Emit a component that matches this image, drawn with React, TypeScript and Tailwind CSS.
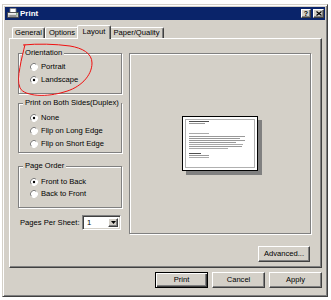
import type { ReactNode } from "react";

const raised =
  "border border-t-white border-l-white border-b-[#404040] border-r-[#404040] shadow-[inset_-1px_-1px_0_#808080] bg-[#d4d0c8]";

function Radio({ checked = false }: { checked?: boolean }) {
  return (
    <svg width="8" height="8" viewBox="0 0 8 8" className="shrink-0">
      <circle cx="4" cy="4" r="3.2" fill="#fff" />
      <path d="M1.5 6.5 A3.5 3.5 0 0 1 6.5 1.5" fill="none" stroke="#808080" strokeWidth="1" />
      <path d="M6.5 1.5 A3.5 3.5 0 0 1 1.5 6.5" fill="none" stroke="#fff" strokeWidth="1" />
      {checked && <circle cx="4" cy="4" r="1.2" fill="#000" />}
    </svg>
  );
}

function Option({ label, checked, h }: { label: string; checked?: boolean; h: string }) {
  return (
    <div className={`flex items-center gap-[3px] ${h}`}>
      <Radio checked={checked} />
      <span>{label}</span>
    </div>
  );
}

function Group({ title, className = "", children }: { title: string; className?: string; children: ReactNode }) {
  return (
    <fieldset
      className={`border border-[#808080] shadow-[inset_1px_1px_0_#fff,1px_1px_0_#fff] ${className}`}
    >
      <legend className="relative ml-[4px] bg-[#d4d0c8] px-[2px] leading-[8px]">{title}</legend>
      {children}
    </fieldset>
  );
}

function PrinterIcon() {
  return (
    <svg width="12" height="11" viewBox="0 0 12 11" className="shrink-0">
      <polygon points="3,0.5 9,0.5 9,4.5 3,4.5" fill="#fff" stroke="#808080" strokeWidth="0.8" />
      <polygon points="0.5,4.5 11.5,4.5 11.5,9.5 0.5,9.5" fill="#c8c8c8" stroke="#404040" strokeWidth="0.8" />
      <rect x="1" y="5" width="10" height="1.5" fill="#f0f0f0" />
      <rect x="2.5" y="7.5" width="7" height="1" fill="#606060" />
      <rect x="9" y="5.5" width="1.5" height="1" fill="#3a8a3a" />
    </svg>
  );
}

function PaperPreview() {
  const lines: [number, number, string][] = [
    [5, 27, "#505050"],
    [7, 23, "#999"],
    [17, 27, "#aaa"],
    [20, 63, "#999"],
    [22, 58, "#999"],
    [24, 63, "#999"],
    [26, 54, "#999"],
    [28, 61, "#aaa"],
    [30, 60, "#999"],
    [32, 46, "#aaa"],
    [37, 19, "#505050"],
    [39, 27, "#999"],
    [41, 27, "#aaa"],
  ];
  return (
    <svg width="80" height="59" viewBox="0 0 80 59">
      <rect x="4" y="4" width="76" height="55" fill="#808080" />
      <rect x="0.5" y="0.5" width="75" height="54" fill="#fff" stroke="#000" />
      <rect x="3.5" y="3.5" width="69" height="48" fill="none" stroke="#b0b0b0" />
      {lines.map(([y, x2, c], i) => (
        <rect key={i} x="7" y={y} width={x2 - 7} height="1" fill={c} />
      ))}
    </svg>
  );
}

function Button({ label, isDefault = false, className = "" }: { label: string; isDefault?: boolean; className?: string }) {
  const cls = isDefault
    ? "border border-black shadow-[inset_1px_1px_0_#fff,inset_-1px_-1px_0_#404040,inset_-2px_-2px_0_#808080] bg-[#d4d0c8]"
    : raised;
  return (
    <div className={`flex items-center justify-center w-[53px] h-[16px] ${cls} ${className}`}>{label}</div>
  );
}

export default function App() {
  return (
    <div className="relative w-[331px] h-[300px] bg-white overflow-hidden font-['Liberation_Sans',Arial,sans-serif] text-[7.6px] leading-none text-black">
      <div className="ml-[2px] mt-[4px] w-[326px] h-[293px] p-[2px] bg-[#d4d0c8] border border-t-[#d4d0c8] border-l-[#d4d0c8] border-b-[#404040] border-r-[#404040] shadow-[inset_1px_1px_0_#fff,inset_-1px_-1px_0_#808080] flex flex-col">
        {/* title bar */}
        <div className="h-[13px] bg-[#0a246a] flex items-center pl-[2px] pr-[1px]">
          <PrinterIcon />
          <span className="ml-[1px] text-white font-bold text-[8px]">Print</span>
          <div className="ml-auto flex gap-[2px]">
            <div className={`w-[10px] h-[9px] flex items-center justify-center font-bold text-[7px] ${raised}`}>?</div>
            <div className={`w-[11px] h-[9px] flex items-center justify-center ${raised}`}>
              <svg width="6" height="5" viewBox="0 0 6 5">
                <path d="M0.5 0.5 L5.5 4.5 M5.5 0.5 L0.5 4.5" stroke="#000" strokeWidth="1.2" />
              </svg>
            </div>
          </div>
        </div>

        {/* tabs */}
        <div className="flex items-end h-[13px] mt-[5px] pl-[7px]">
          <div className="flex items-center justify-center w-[33px] h-[11px] border-t border-l border-r border-t-white border-l-white border-r-[#404040] shadow-[inset_-1px_0_0_#808080] rounded-t-[2px]">General</div>
          <div className="flex items-center justify-center w-[34px] h-[11px] border-t border-l border-r border-t-white border-l-white border-r-[#404040] shadow-[inset_-1px_0_0_#808080] rounded-t-[2px]">Options</div>
          <div className="relative z-10 -mx-[2px] -mb-px flex items-center justify-center w-[34px] h-[14px] pb-[2px] bg-[#d4d0c8] border-t border-l border-r border-t-white border-l-white border-r-[#404040] shadow-[inset_-1px_0_0_#808080] rounded-t-[2px]">Layout</div>
          <div className="flex items-center justify-center w-[55px] h-[11px] border-t border-l border-r border-t-white border-l-white border-r-[#404040] shadow-[inset_-1px_0_0_#808080] rounded-t-[2px]">Paper/Quality</div>
        </div>

        {/* panel */}
        <div className={`h-[230px] ml-[4px] mr-[3px] flex items-start pt-[10px] pl-[8px] pr-[10px] ${raised}`}>
          <div className="w-[104px] flex flex-col">
            <Group title="Orientation">
              <div className="pl-[11px] pt-[3px] pb-[7px]">
                <Option h="h-[13px]" label="Portrait" />
                <Option h="h-[13px]" label="Landscape" checked />
              </div>
            </Group>
            <Group title="Print on Both Sides(Duplex)" className="mt-[5px]">
              <div className="pl-[11px] pt-[4px] pb-[2px]">
                <Option h="h-[13px]" label="None" checked />
                <Option h="h-[13px]" label="Flip on Long Edge" />
                <Option h="h-[13px]" label="Flip on Short Edge" />
              </div>
            </Group>
            <Group title="Page Order" className="mt-[9px]">
              <div className="pl-[11px] pt-[6px] pb-[7px]">
                <Option h="h-[12px]" label="Front to Back" checked />
                <Option h="h-[12px]" label="Back to Front" />
              </div>
            </Group>
            <div className="flex items-center h-[15px] mt-[7px] pl-[2px]">
              <span>Pages Per Sheet:</span>
              <div className="ml-auto mr-[1px] w-[39px] h-[15px] p-[2px] flex bg-white border border-t-[#808080] border-l-[#808080] border-b-white border-r-white shadow-[inset_1px_1px_0_#404040,inset_-1px_-1px_0_#d4d0c8]">
                <span className="flex-1 flex items-center pl-[2px]">1</span>
                <div className={`w-[10px] h-full flex items-center justify-center ${raised}`}>
                  <svg width="5" height="3" viewBox="0 0 5 3">
                    <polygon points="0,0 5,0 2.5,3" fill="#000" />
                  </svg>
                </div>
              </div>
            </div>
          </div>

          <div className="flex-1 ml-[7px] mt-[4px] flex flex-col">
            <div className="h-[181px] border border-[#808080] shadow-[inset_1px_1px_0_#fff,1px_1px_0_#fff] flex items-center justify-center pl-[4px] pt-[4px]">
              <PaperPreview />
            </div>
            <div className={`self-end mr-[1px] mt-[12px] w-[52px] h-[16px] flex items-center justify-center ${raised}`}>Advanced...</div>
          </div>
        </div>

        {/* bottom buttons */}
        <div className="flex justify-end gap-[4px] mt-[4px] pr-[3px]">
          <Button label="Print" isDefault />
          <Button label="Cancel" />
          <Button label="Apply" />
        </div>
      </div>

      {/* hand-drawn annotation */}
      <svg className="absolute left-0 top-0 pointer-events-none" width="331" height="300" viewBox="0 0 331 300">
        <path
          d="M25 44.5 C22 58 16 78 20 88 C25 97 48 97 64 92 C80 88 92 76 92 63 C92 53 82 48 70 46 C55 44 38 43.5 23 45"
          fill="none"
          stroke="#f01010"
          strokeWidth="1"
        />
      </svg>
    </div>
  );
}
